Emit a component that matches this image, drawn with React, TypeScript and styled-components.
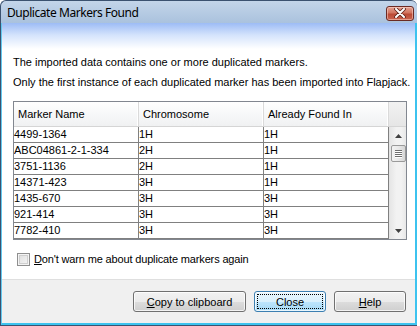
import React from "react";
import styled, { createGlobalStyle } from "styled-components";

const Global = createGlobalStyle`
  html, body { margin: 0; padding: 0; background: #ffffff; }
  body { width: 420px; height: 326px; overflow: hidden; }
  * { box-sizing: border-box; }
`;

const UI_FONT = `"Liberation Sans", Arial, sans-serif`;
const TITLE_FONT = `"Noto Sans", "Open Sans", sans-serif`;

const Window = styled.div`
  width: 417px;
  height: 326px;
  display: flex;
  flex-direction: column;
  background: linear-gradient(#c3d5e9, #a9c1dd 23px);
  border: 1px solid #3b5270;
  border-right: none;
  border-radius: 6px 6px 0 0;
  font-family: ${UI_FONT};
  font-size: 11px;
  color: #000;
`;

const TitleBar = styled.div`
  height: 22px;
  flex: none;
  display: flex;
  align-items: center;
  justify-content: space-between;
  padding: 0 3px 0 6px;
`;

const Title = styled.span`
  font-family: ${TITLE_FONT};
  font-size: 12px;
  letter-spacing: -0.45px;
  color: #000;
  padding-top: 1px;
`;

const CloseBox = styled.div`
  width: 28px;
  height: 15px;
  margin-top: 2px;
  border: 1px solid #6b2a24;
  border-radius: 3px;
  background: linear-gradient(#e5a393 0, #d1745f 45%, #bb4a35 55%, #c96450 100%);
  display: flex;
  align-items: center;
  justify-content: center;
  box-shadow: inset 0 0 0 1px rgba(255, 220, 210, 0.5);
`;

const Client = styled.div`
  flex: 1;
  display: flex;
  flex-direction: column;
  border-left: 1px solid #63c9ef;
  border-right: 2px solid #3cc3ef;
  border-bottom: 2px solid #3cc3ef;
  background: #f0f0f0;
`;

const Content = styled.div`
  flex: 1;
  background: linear-gradient(#9dbcf6 0, #d4e3fc 12px, #ffffff 26px);
  padding: 29px 8px 0 11px;
  display: flex;
  flex-direction: column;
`;

const Message = styled.div`
  line-height: 20px;
  white-space: nowrap;
`;

const Table = styled.div`
  margin-top: 9px;
  border: 1px solid #828790;
  display: grid;
  grid-template-columns: 375px 17px;
  grid-template-rows: 25px 112px;
  background: #fff;
`;

const Header = styled.div`
  display: grid;
  grid-template-columns: 125px 125px 125px;
  background: linear-gradient(#ffffff 0, #f7f8f9 50%, #f0f1f2 100%);
  border-bottom: 1px solid #d5d5d5;
`;

const HeaderCell = styled.div`
  padding: 0 0 0 4px;
  display: flex;
  align-items: center;
  border-right: 1px solid #dadada;
  box-shadow: inset -1px 0 0 #ffffff;
  color: #000;
  white-space: nowrap;
`;

const Corner = styled.div`
  background: linear-gradient(#f2f2f2, #e6e6e6);
  border-bottom: 1px solid #d5d5d5;
`;

const Body = styled.div`
  display: flex;
  flex-direction: column;
`;

const Row = styled.div`
  display: grid;
  grid-template-columns: 125px 125px 125px;
  height: 16px;
`;

const Cell = styled.div`
  border-right: 1px solid #808080;
  border-bottom: 1px solid #808080;
  line-height: 15px;
  padding-left: 0;
  white-space: nowrap;
  overflow: hidden;
`;

const ScrollBar = styled.div`
  display: flex;
  flex-direction: column;
  align-items: center;
  background: linear-gradient(90deg, #e6e6e6, #f2f2f2 40%, #f2f2f2 70%, #e8e8e8);
  border-left: 1px solid #e3e3e3;
`;

const Arrow = styled.div`
  height: 17px;
  width: 100%;
  display: flex;
  align-items: center;
  justify-content: center;
`;

const Thumb = styled.div`
  margin-top: 1px;
  width: 15px;
  height: 17px;
  border: 1px solid #9a9a9a;
  border-radius: 2px;
  background: linear-gradient(90deg, #f3f3f3, #e8e8e8 50%, #d6d6d6);
  display: flex;
  flex-direction: column;
  align-items: center;
  justify-content: center;
  gap: 1px;
`;

const Grip = styled.div`
  width: 7px;
  height: 1px;
  background: #6f6f6f;
  box-shadow: 0 1px 0 #ffffff;
`;

const Track = styled.div`
  flex: 1;
`;

const CheckRow = styled.label`
  margin-top: 13px;
  margin-left: 4px;
  display: flex;
  align-items: center;
  gap: 4px;
  line-height: 13px;
`;

const CheckBox = styled.span`
  width: 13px;
  height: 13px;
  border: 1px solid #8f8f8f;
  background: linear-gradient(135deg, #dcdcdc, #f7f7f7);
  box-shadow: inset 0 0 0 1px #f4f4f4, inset 0 0 0 2px #cfcfcf;
`;

const CheckLabel = styled.span`
  letter-spacing: -0.15px;
`;

const Mn = styled.span`
  text-decoration: underline;
`;

const ButtonBar = styled.div`
  height: 44px;
  flex: none;
  border-top: 1px solid #dfdfdf;
  display: flex;
  justify-content: flex-end;
  align-items: flex-start;
  gap: 8px;
  padding: 11px 9px 0 0;
  background: #f0f0f0;
`;

const Button = styled.button<{ $width: number; $default?: boolean }>`
  width: ${(p) => p.$width}px;
  height: 21px;
  padding: 0;
  font-family: ${UI_FONT};
  font-size: 11px;
  color: #000;
  border-radius: 3px;
  border: 1px solid ${(p) => (p.$default ? "#3c7fb1" : "#707070")};
  background: ${(p) =>
    p.$default
      ? "linear-gradient(#eaf6fd 0, #d9f0fc 50%, #bee6fd 50%, #a7d9f5 100%)"
      : "linear-gradient(#f2f2f2 0, #ebebeb 50%, #dddddd 50%, #cfcfcf 100%)"};
  box-shadow: inset 0 0 0 1px rgba(255, 255, 255, 0.75);
  display: flex;
  align-items: center;
  justify-content: center;
  position: relative;
`;

const Focus = styled.span`
  position: absolute;
  inset: 2px;
  border: 1px dotted #000;
`;

const rows = [
  ["4499-1364", "1H", "1H"],
  ["ABC04861-2-1-334", "2H", "1H"],
  ["3751-1136", "2H", "1H"],
  ["14371-423", "3H", "1H"],
  ["1435-670", "3H", "3H"],
  ["921-414", "3H", "3H"],
  ["7782-410", "3H", "3H"],
];

export default function App() {
  return (
    <>
      <Global />
      <Window>
        <TitleBar>
          <Title>Duplicate Markers Found</Title>
          <CloseBox>
            <svg width="12" height="10" viewBox="0 0 12 10">
              <path
                d="M2 1 L10 9 M10 1 L2 9"
                stroke="#5a2018"
                strokeWidth="3.6"
                strokeLinecap="round"
              />
              <path
                d="M2 1 L10 9 M10 1 L2 9"
                stroke="#ffffff"
                strokeWidth="2"
                strokeLinecap="round"
              />
            </svg>
          </CloseBox>
        </TitleBar>
        <Client>
          <Content>
            <Message>The imported data contains one or more duplicated markers.</Message>
            <Message>
              Only the first instance of each duplicated marker has been imported into Flapjack.
            </Message>
            <Table>
              <Header>
                <HeaderCell>Marker Name</HeaderCell>
                <HeaderCell>Chromosome</HeaderCell>
                <HeaderCell>Already Found In</HeaderCell>
              </Header>
              <Corner />
              <Body>
                {rows.map((r) => (
                  <Row key={r[0]}>
                    {r.map((c, i) => (
                      <Cell key={i}>{c}</Cell>
                    ))}
                  </Row>
                ))}
              </Body>
              <ScrollBar>
                <Arrow>
                  <svg width="7" height="4" viewBox="0 0 7 4">
                    <path d="M0 4 L3.5 0 L7 4 Z" fill="#404040" />
                  </svg>
                </Arrow>
                <Thumb>
                  <Grip />
                  <Grip />
                  <Grip />
                  <Grip />
                </Thumb>
                <Track />
                <Arrow>
                  <svg width="7" height="4" viewBox="0 0 7 4">
                    <path d="M0 0 L7 0 L3.5 4 Z" fill="#404040" />
                  </svg>
                </Arrow>
              </ScrollBar>
            </Table>
            <CheckRow>
              <CheckBox />
              <CheckLabel>
                <Mn>D</Mn>on't warn me about duplicate markers again
              </CheckLabel>
            </CheckRow>
          </Content>
          <ButtonBar>
            <Button $width={113}>
              <span>
                <Mn>C</Mn>opy to clipboard
              </span>
            </Button>
            <Button $width={72} $default>
              <Focus />
              Close
            </Button>
            <Button $width={72}>
              <span>
                <Mn>H</Mn>elp
              </span>
            </Button>
          </ButtonBar>
        </Client>
      </Window>
    </>
  );
}
